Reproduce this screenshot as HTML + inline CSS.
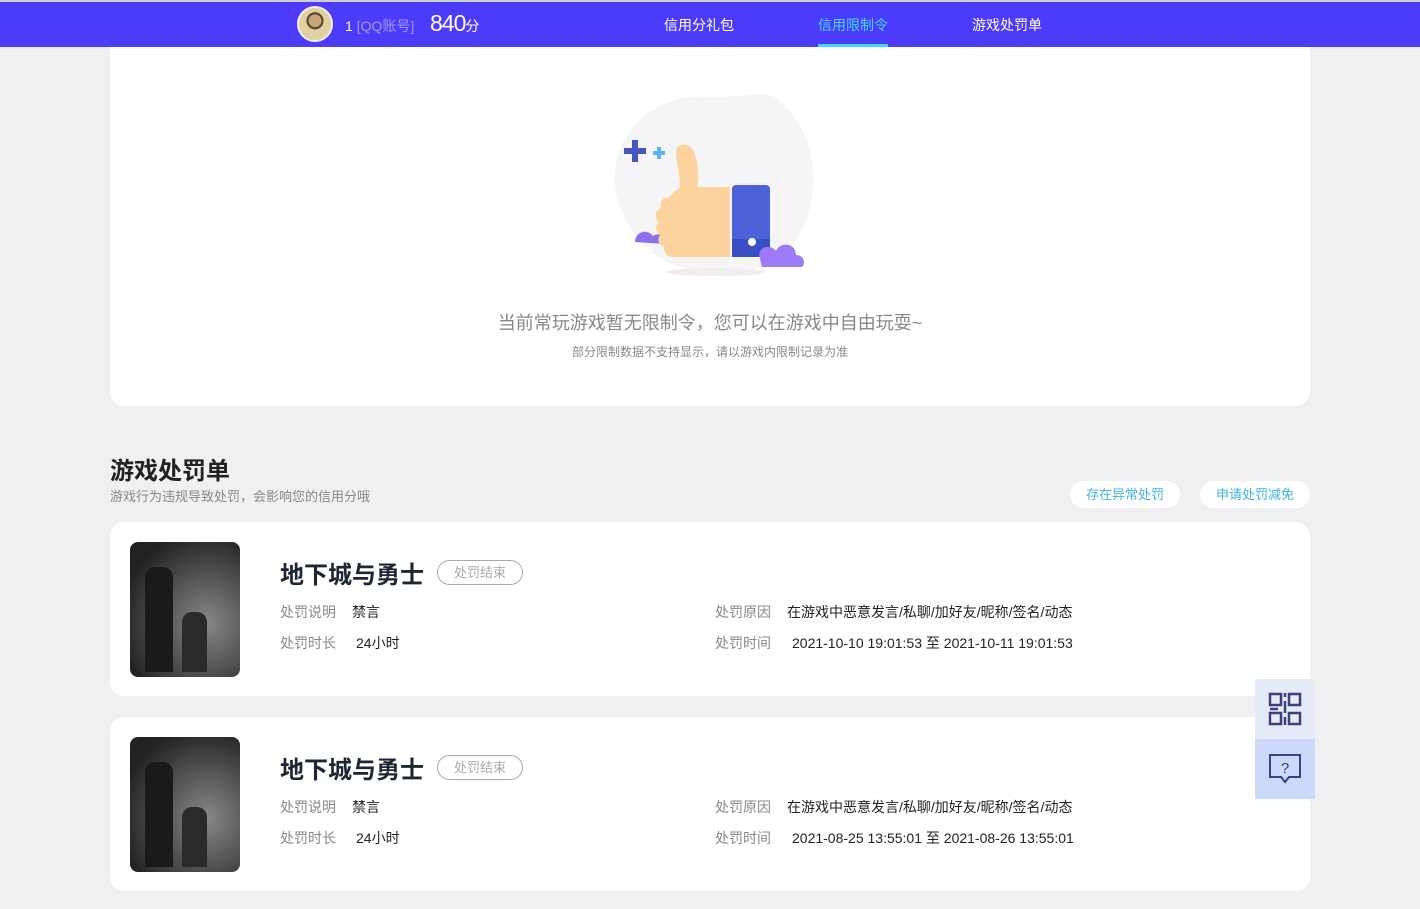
<!DOCTYPE html>
<html><head><meta charset="utf-8"><style>
*{margin:0;padding:0;box-sizing:border-box}
body{width:1420px;height:909px;background:#f0f0f0;font-family:"Liberation Sans","Noto Sans CJK SC",sans-serif;position:relative;overflow:hidden}
.nav{position:absolute;left:0;top:0;width:1420px;height:47px;background:#4c3bf9;border-top:2px solid #cfcfcf}
.nav .av{position:absolute;left:297px;top:4px;width:36px;height:36px;border-radius:50%;background:radial-gradient(circle at 50% 40%,#c9a37a 0 25%,#5a4a3a 26% 34%,#e3d0a0 35%);border:2px solid #eee}
.nav .uid{position:absolute;left:345px;top:14px;color:#fff;font-size:14px}
.nav .uid span{color:#9f97ff}
.nav .sc{position:absolute;left:430px;top:8px;color:#fff;font-size:23px;letter-spacing:-1px}
.nav .sc small{font-size:14px;letter-spacing:0}
.nav a{position:absolute;top:13px;color:#fff;font-size:14px}
.nav .act{color:#3fd8ff}
.nav .bar{position:absolute;left:818px;top:42px;width:70px;height:3px;background:#3fd8ff}
.top{position:absolute;left:110px;top:47px;width:1200px;height:359px;background:#fff;border-radius:0 0 14px 14px}
.msg{position:absolute;left:0;width:1200px;text-align:center}
h2{position:absolute;left:110px;top:451px;font-size:24px;color:#222;font-weight:bold}
.sub{position:absolute;left:110px;top:486px;font-size:13px;color:#888}
.btn{position:absolute;top:481px;height:27px;width:110px;border-radius:14px;background:#fff;color:#3fb3e6;font-size:13px;text-align:center;line-height:27px}
.card{position:absolute;left:110px;width:1200px;height:174px;background:#fff;border-radius:14px}
.img{position:absolute;left:20px;top:20px;width:110px;height:135px;border-radius:8px;background:radial-gradient(ellipse at 70% 60%,#888 0,#555 40%,#222 80%),#333;overflow:hidden}
.img:before{content:"";position:absolute;left:15px;top:25px;width:28px;height:105px;background:#1a1a1a;border-radius:10px 10px 0 0}
.img:after{content:"";position:absolute;left:52px;top:70px;width:25px;height:60px;background:#2a2a2a;border-radius:10px 10px 0 0}
.t{position:absolute;left:170px;top:33px;font-size:24px;font-weight:bold;color:#1e2633}
.tag{position:absolute;left:327px;top:38px;width:86px;height:25px;border:1px solid #aaa;border-radius:13px;color:#aaa;font-size:13px;text-align:center;line-height:23px}
.l{position:absolute;font-size:14px;color:#888}
.v{position:absolute;font-size:14px;color:#222}
.side1{position:absolute;left:1255px;top:679px;width:60px;height:60px;background:#e6ebfa}
.side2{position:absolute;left:1255px;top:739px;width:60px;height:60px;background:#cdd9fb}
</style></head><body>
<div class="nav">
<div class="av"></div>
<div class="uid">1 <span>[QQ账号]</span></div>
<div class="sc">840<small>分</small></div>
<a style="left:664px">信用分礼包</a>
<a class="act" style="left:818px">信用限制令</a>
<a style="left:972px">游戏处罚单</a>
<div class="bar"></div>
</div>
<div class="top">
<svg style="position:absolute;left:500px;top:40px" width="210" height="200" viewBox="0 0 210 200">
<path d="M5 100 C0 50 40 5 100 10 C140 12 160 -5 180 25 C215 60 210 140 170 170 C120 205 20 190 5 100Z" fill="#f5f5f7"/>
<ellipse cx="105" cy="185" rx="50" ry="4" fill="#eee"/>
<path d="M18 55 h8 v-8 h6 v8 h8 v6 h-8 v8 h-6 v-8 h-8z" fill="#4757bb" transform="translate(-4 6)"/>
<path d="M43 64 h4 v-4 h4 v4 h4 v4 h-4 v4 h-4 v-4 h-4z" fill="#59b7f0"/>
<path d="M25 155 c0 -10 12 -14 18 -6 c6 -4 14 0 12 8 z" fill="#8c70f0"/>
<path d="M70 100 c0 -15 -4 -25 -4 -35 c0 -10 14 -10 18 0 c5 12 4 25 4 35 h32 v70 h-56 c-8 0 -10 -5 -10 -10 c-6 -2 -7 -8 -4 -12 c-5 -3 -5 -10 -1 -13 c-5 -4 -4 -12 2 -14 c-2 -6 2 -11 8 -11z" fill="#fdd3a0"/>
<rect x="122" y="98" width="38" height="72" rx="4" fill="#4c62d8"/>
<rect x="122" y="152" width="38" height="18" fill="#3a4fc4"/>
<circle cx="142" cy="155" r="4" fill="#fff"/>
<path d="M150 172 c-4 -12 10 -16 16 -8 c4 -10 20 -8 20 4 c8 0 10 8 6 12 h-40z" fill="#9b7cf5"/>
</svg>
<div class="msg" style="top:262px;font-size:18px;color:#888">当前常玩游戏暂无限制令，您可以在游戏中自由玩耍~</div>
<div class="msg" style="top:296px;font-size:12px;color:#888">部分限制数据不支持显示，请以游戏内限制记录为准</div>
</div>
<h2>游戏处罚单</h2>
<div class="sub">游戏行为违规导致处罚，会影响您的信用分哦</div>
<div class="btn" style="left:1070px">存在异常处罚</div>
<div class="btn" style="left:1200px">申请处罚减免</div>

<div class="card" style="top:522px">
<div class="img"></div><div class="t">地下城与勇士</div><div class="tag">处罚结束</div>
<div class="l" style="left:170px;top:80px">处罚说明</div><div class="v" style="left:242px;top:80px">禁言</div>
<div class="l" style="left:170px;top:111px">处罚时长</div><div class="v" style="left:246px;top:111px">24小时</div>
<div class="l" style="left:605px;top:80px">处罚原因</div><div class="v" style="left:677px;top:80px">在游戏中恶意发言/私聊/加好友/昵称/签名/动态</div>
<div class="l" style="left:605px;top:111px">处罚时间</div><div class="v" style="left:682px;top:111px">2021-10-10 19:01:53 至 2021-10-11 19:01:53</div>
</div>
<div class="card" style="top:717px">
<div class="img"></div><div class="t">地下城与勇士</div><div class="tag">处罚结束</div>
<div class="l" style="left:170px;top:80px">处罚说明</div><div class="v" style="left:242px;top:80px">禁言</div>
<div class="l" style="left:170px;top:111px">处罚时长</div><div class="v" style="left:246px;top:111px">24小时</div>
<div class="l" style="left:605px;top:80px">处罚原因</div><div class="v" style="left:677px;top:80px">在游戏中恶意发言/私聊/加好友/昵称/签名/动态</div>
<div class="l" style="left:605px;top:111px">处罚时间</div><div class="v" style="left:682px;top:111px">2021-08-25 13:55:01 至 2021-08-26 13:55:01</div>
</div>
<div class="side1"><svg width="60" height="60" viewBox="0 0 60 60" fill="none" stroke="#3a4080" stroke-width="2.5"><rect x="15" y="15" width="11" height="11"/><rect x="34" y="15" width="11" height="11"/><rect x="15" y="34" width="11" height="11"/><rect x="34" y="34" width="11" height="11"/><path d="M30 14v4M30 22v12M15 30h8M30 38v8"/></svg></div>
<div class="side2"><svg width="60" height="60" viewBox="0 0 60 60" fill="none" stroke="#3a4080" stroke-width="2"><path d="M15 16h30v22h-11l-4 5-4-5h-11z"/><text x="30" y="34" font-size="15" fill="#3a4080" stroke="none" text-anchor="middle" font-family="Liberation Sans">?</text></svg></div>
</body></html>
